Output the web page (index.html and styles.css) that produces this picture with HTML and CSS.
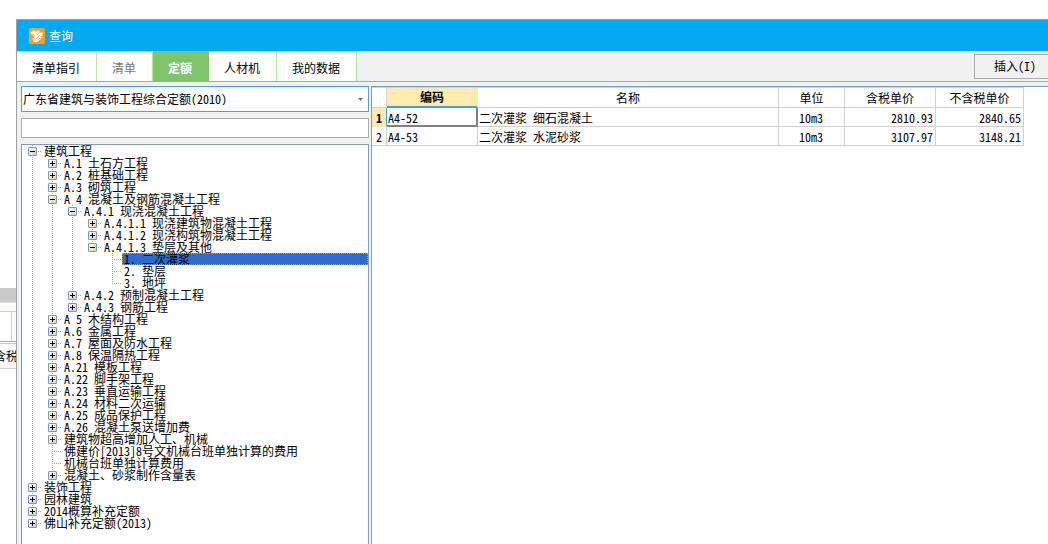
FILE: index.html
```html
<!DOCTYPE html>
<html lang="zh-CN">
<head>
<meta charset="utf-8">
<title>查询</title>
<link rel="stylesheet" href="styles.css">
</head>
<body>
<div class="desktop">
  <aside class="backdrop">
    <div class="backdrop-bar"></div>
    <div class="backdrop-tabs"></div>
    <div class="backdrop-head"><span>含税</span></div>
  </aside>
  <main class="window">
    <header class="titlebar">
      <svg class="logo" viewBox="0 0 16 16" aria-hidden="true">
        <rect width="16" height="16" rx="2" fill="#f9a01f"/>
        <path d="M1.400 4.600 5.400 2.200 7 3.800 9.400 2 11 3.400 5.800 8.800 4 7.800 6 5.600 3 6.800z" fill="#fff"/>
        <path d="M4.600 13.400 3.400 10.800 11 4.600 14 4.800 13.200 7.800 11 9 13 9.200 10 12.800 6.600 14.200z" fill="#fff"/>
        <path d="M6.400 11.400 11.400 6.800M8.200 12.400 11 10" stroke="#f9a01f" stroke-width=".9" fill="none"/>
      </svg>
      <h1 class="title">查询</h1>
    </header>
    <div class="toolbar">
      <nav class="tabs">
        <button class="tab" type="button">清单指引</button>
        <button class="tab tab-muted" type="button">清单</button>
        <button class="tab tab-active" type="button">定额</button>
        <button class="tab" type="button">人材机</button>
        <button class="tab" type="button">我的数据</button>
      </nav>
      <button class="insert" type="button">插入(I)</button>
    </div>
    <div class="content">
      <section class="sidebar">
        <div class="combo">
          <select class="combo-select" aria-label="定额库"><option>广东省建筑与装饰工程综合定额(2010)</option></select>
          <svg class="combo-arrow" viewBox="0 0 5 3" aria-hidden="true"><path d="M0 0h5L2.500 3z" fill="#6b7079"/></svg>
        </div>
        <input class="search" type="text" aria-label="搜索">
        <div class="tree">
          <ul class="branch">
            <li><div class="node"><button class="toggle open" type="button" aria-label="折叠"></button><span class="label">建筑工程</span></div>
              <ul class="branch">
                <li><div class="node"><button class="toggle" type="button" aria-label="展开"></button><span class="label">A.1 土石方工程</span></div></li>
                <li><div class="node"><button class="toggle" type="button" aria-label="展开"></button><span class="label">A.2 桩基础工程</span></div></li>
                <li><div class="node"><button class="toggle" type="button" aria-label="展开"></button><span class="label">A.3 砌筑工程</span></div></li>
                <li><div class="node"><button class="toggle open" type="button" aria-label="折叠"></button><span class="label">A 4 混凝土及钢筋混凝土工程</span></div>
                  <ul class="branch">
                    <li><div class="node"><button class="toggle open" type="button" aria-label="折叠"></button><span class="label">A.4.1 现浇混凝土工程</span></div>
                      <ul class="branch">
                        <li><div class="node"><button class="toggle" type="button" aria-label="展开"></button><span class="label">A.4.1.1 现浇建筑物混凝土工程</span></div></li>
                        <li><div class="node"><button class="toggle" type="button" aria-label="展开"></button><span class="label">A.4.1.2 现浇构筑物混凝土工程</span></div></li>
                        <li><div class="node"><button class="toggle open" type="button" aria-label="折叠"></button><span class="label">A.4.1.3 垫层及其他</span></div>
                          <ul class="branch">
                            <li><div class="node leaf"><span class="label selected">1. 二次灌浆</span></div></li>
                            <li><div class="node leaf"><span class="label">2. 垫层</span></div></li>
                            <li><div class="node leaf"><span class="label">3. 地坪</span></div></li>
                          </ul>
                        </li>
                      </ul>
                    </li>
                    <li><div class="node"><button class="toggle" type="button" aria-label="展开"></button><span class="label">A.4.2 预制混凝土工程</span></div></li>
                    <li><div class="node"><button class="toggle" type="button" aria-label="展开"></button><span class="label">A.4.3 钢筋工程</span></div></li>
                  </ul>
                </li>
                <li><div class="node"><button class="toggle" type="button" aria-label="展开"></button><span class="label">A 5 木结构工程</span></div></li>
                <li><div class="node"><button class="toggle" type="button" aria-label="展开"></button><span class="label">A.6 金属工程</span></div></li>
                <li><div class="node"><button class="toggle" type="button" aria-label="展开"></button><span class="label">A.7 屋面及防水工程</span></div></li>
                <li><div class="node"><button class="toggle" type="button" aria-label="展开"></button><span class="label">A.8 保温隔热工程</span></div></li>
                <li><div class="node"><button class="toggle" type="button" aria-label="展开"></button><span class="label">A.21 模板工程</span></div></li>
                <li><div class="node"><button class="toggle" type="button" aria-label="展开"></button><span class="label">A.22 脚手架工程</span></div></li>
                <li><div class="node"><button class="toggle" type="button" aria-label="展开"></button><span class="label">A.23 垂直运输工程</span></div></li>
                <li><div class="node"><button class="toggle" type="button" aria-label="展开"></button><span class="label">A.24 材料二次运输</span></div></li>
                <li><div class="node"><button class="toggle" type="button" aria-label="展开"></button><span class="label">A.25 成品保护工程</span></div></li>
                <li><div class="node"><button class="toggle" type="button" aria-label="展开"></button><span class="label">A.26 混凝土泵送增加费</span></div></li>
                <li><div class="node"><button class="toggle" type="button" aria-label="展开"></button><span class="label">建筑物超高增加人工、机械</span></div></li>
                <li><div class="node leaf"><span class="label">佛建价[2013]8号文机械台班单独计算的费用</span></div></li>
                <li><div class="node leaf"><span class="label">机械台班单独计算费用</span></div></li>
                <li><div class="node"><button class="toggle" type="button" aria-label="展开"></button><span class="label">混凝土、砂浆制作含量表</span></div></li>
              </ul>
            </li>
            <li><div class="node"><button class="toggle" type="button" aria-label="展开"></button><span class="label">装饰工程</span></div></li>
            <li><div class="node"><button class="toggle" type="button" aria-label="展开"></button><span class="label">园林建筑</span></div></li>
            <li><div class="node"><button class="toggle" type="button" aria-label="展开"></button><span class="label">2014概算补充定额</span></div></li>
            <li><div class="node"><button class="toggle" type="button" aria-label="展开"></button><span class="label">佛山补充定额(2013)</span></div></li>
          </ul>
        </div>
      </section>
      <section class="grid-pane">
        <table class="grid">
          <colgroup><col class="c-index"><col class="c-code"><col class="c-name"><col class="c-unit"><col class="c-price"><col class="c-net"></colgroup>
          <thead>
            <tr><th></th><th class="current-col">编码</th><th>名称</th><th>单位</th><th>含税单价</th><th>不含税单价</th></tr>
          </thead>
          <tbody>
            <tr><th class="current-row">1</th><td class="current-cell">A4-52</td><td>二次灌浆 细石混凝土</td><td class="center">10m3</td><td class="number">2810.93</td><td class="number">2840.65</td></tr>
            <tr><th>2</th><td>A4-53</td><td>二次灌浆 水泥砂浆</td><td class="center">10m3</td><td class="number">3107.97</td><td class="number">3148.21</td></tr>
          </tbody>
        </table>
      </section>
    </div>
  </main>
</div>
</body>
</html>
```
FILE: styles.css
```css
* {
  box-sizing: border-box;
}

body {
  margin: 0;
  background: #fff;
  color: #000;
}

body,
button,
input,
select {
  font-family: "Noto Sans CJK SC", "Noto Sans", sans-serif;
  font-size: 12px;
  line-height: 12px;
  font-feature-settings: "hwid";
}

button {
  margin: 0;
  padding: 0;
  border: 0;
  border-radius: 0;
  color: inherit;
}

.desktop {
  display: flex;
  height: 100vh;
  overflow: hidden;
}

/* Strip of the parent window that stays visible beside the dialog */
.backdrop {
  flex: 0 0 16px;
  padding-top: 288px;
  overflow: hidden;
}

.backdrop-bar {
  height: 15px;
  background: #cacaca;
  border-bottom: 1px solid #dcdcdc;
}

.backdrop-tabs {
  height: 31px;
  margin-top: 8px;
  border-top: 1px solid #b5e6a2;
  border-bottom: 1px solid #7cc576;
  background: linear-gradient(#b5e6a2, #b5e6a2) 11px 0 / 1px 100% no-repeat;
}

.backdrop-head {
  display: flex;
  align-items: center;
  justify-content: flex-end;
  height: 26px;
  margin: 1px -2px 0 0;
  border-top: 1px solid #c8c8c8;
  border-bottom: 1px solid #d0d0d0;
  white-space: nowrap;
}

.window {
  display: flex;
  flex: 1;
  flex-direction: column;
  min-width: 0;
  margin-top: 19px;
  border-top: 1px solid #a0a0a0;
  border-left: 1px solid #a0a0a0;
  background: #f1f1f1;
}

.titlebar {
  display: flex;
  align-items: center;
  gap: 4px;
  height: 31px;
  padding-left: 12px;
  background: #03a9f1;
  color: #fff;
}

.logo {
  width: 16px;
  height: 16px;
}

.title {
  margin: 0;
  font-size: 12px;
  font-weight: 400;
}

.toolbar {
  display: flex;
  justify-content: space-between;
  height: 31px;
  border-bottom: 1px solid #7cc576;
}

.tabs {
  display: flex;
}

.tab {
  padding: 2px 16px 0 15px;
  border-top: 1px solid #b5e6a2;
  border-right: 1px solid #b5e6a2;
  background: #fff;
}

.tab-muted {
  color: #777;
}

.tab-active {
  border-color: #7fc46b;
  background: #7fc46b;
  color: #fff;
  font-weight: 700;
}

.insert {
  align-self: center;
  height: 25px;
  padding: 0 12px 0 19px;
  border: 1px solid #adadad;
  border-right: 0;
  background: #f1f1f1;
}

.content {
  display: flex;
  flex: 1;
  gap: 2px;
  min-height: 0;
  padding: 4px 0 0 4px;
}

.sidebar {
  display: flex;
  flex: 0 0 348px;
  flex-direction: column;
  gap: 6px;
}

.combo {
  display: grid;
  align-items: center;
  height: 26px;
  border: 1px solid #4ba6cf;
  background: #fff;
}

.combo-select {
  grid-area: 1 / 1;
  width: 100%;
  height: 100%;
  padding: 0 20px 0 1px;
  border: 0;
  background: none;
  color: inherit;
  appearance: none;
}

.combo-arrow {
  grid-area: 1 / 1;
  justify-self: end;
  width: 5px;
  height: 3px;
  margin-right: 5px;
  pointer-events: none;
}

.search {
  height: 20px;
  padding: 0 2px;
  border: 1px solid #adadad;
  background: #fff;
}

.tree {
  flex: 1;
  min-height: 0;
  padding-left: 6px;
  overflow: hidden;
  border: 1px solid #7f9db9;
  border-bottom: 0;
  background: #fff;
}

.branch {
  margin: 0;
  padding: 0;
  list-style: none;
}

.branch .branch {
  padding-left: 20px;
}

/* Dotted guide running down past each sibling */
.branch > li {
  background: repeating-linear-gradient(#aaa294 0 1px, transparent 1px 2px) 4px 0 / 1px 100% no-repeat;
}

.branch > li:last-child {
  background-size: 1px 7px;
}

.node {
  display: flex;
  align-items: center;
  height: 12px;
  white-space: nowrap;
  background: repeating-linear-gradient(90deg, #aaa294 0 1px, transparent 1px 2px) 4px 6px / 10px 1px no-repeat;
}

.leaf {
  padding-left: 14px;
}

.toggle {
  flex: 0 0 9px;
  height: 9px;
  margin: 1px 5px 0 0;
  border: 1px solid #7898b5;
  border-radius: 1px;
  background:
    linear-gradient(#000, #000) center / 5px 1px no-repeat,
    linear-gradient(#000, #000) center / 1px 5px no-repeat,
    linear-gradient(135deg, #fff, #d5cfc2);
}

.toggle.open {
  background:
    linear-gradient(#000, #000) center / 5px 1px no-repeat,
    linear-gradient(135deg, #fff, #d5cfc2);
}

.label {
  flex: 1;
  padding-left: 2px;
}

.selected {
  background: #316ac5;
  outline: 1px dotted #ce953a;
  outline-offset: -1px;
}

.grid-pane {
  flex: 1;
  min-width: 0;
  overflow: hidden;
  border-top: 1px solid #7f9db9;
  border-left: 1px solid #7f9db9;
  background: #fff;
}

.grid {
  width: 652px;
  table-layout: fixed;
  border-collapse: separate;
  border-spacing: 0;
}

.c-index { width: 15px; }
.c-code { width: 91px; }
.c-name { width: 301px; }
.c-unit { width: 66px; }
.c-price { width: 91px; }
.c-net { width: 88px; }

.grid th,
.grid td {
  height: 19px;
  padding: 2px 2px 0;
  overflow: hidden;
  border-right: 1px solid #d0d0d0;
  border-bottom: 1px solid #d0d0d0;
  font-weight: 400;
  text-align: left;
  white-space: nowrap;
}

.grid thead th {
  height: 21px;
  padding-top: 0;
  border-top: 1px solid #d0d0d0;
  text-align: center;
}

.grid tbody th {
  padding: 2px 0 0;
  text-align: center;
}

.grid td {
  padding-left: 1px;
}

.grid .center {
  text-align: center;
}

.grid .number {
  text-align: right;
}

.grid .current-col {
  border-right-color: #ffebb0;
  border-bottom: 2px solid #3ba5d3;
  background: #ffebb0;
  font-weight: 700;
}

.grid .current-row {
  border-right-color: #3ba5d3;
  border-bottom-color: #ffebb0;
  background: #ffebb0;
  font-weight: 700;
}

.grid .current-cell {
  border-right: 2px solid #808080;
  border-bottom: 2px solid #808080;
}
```
